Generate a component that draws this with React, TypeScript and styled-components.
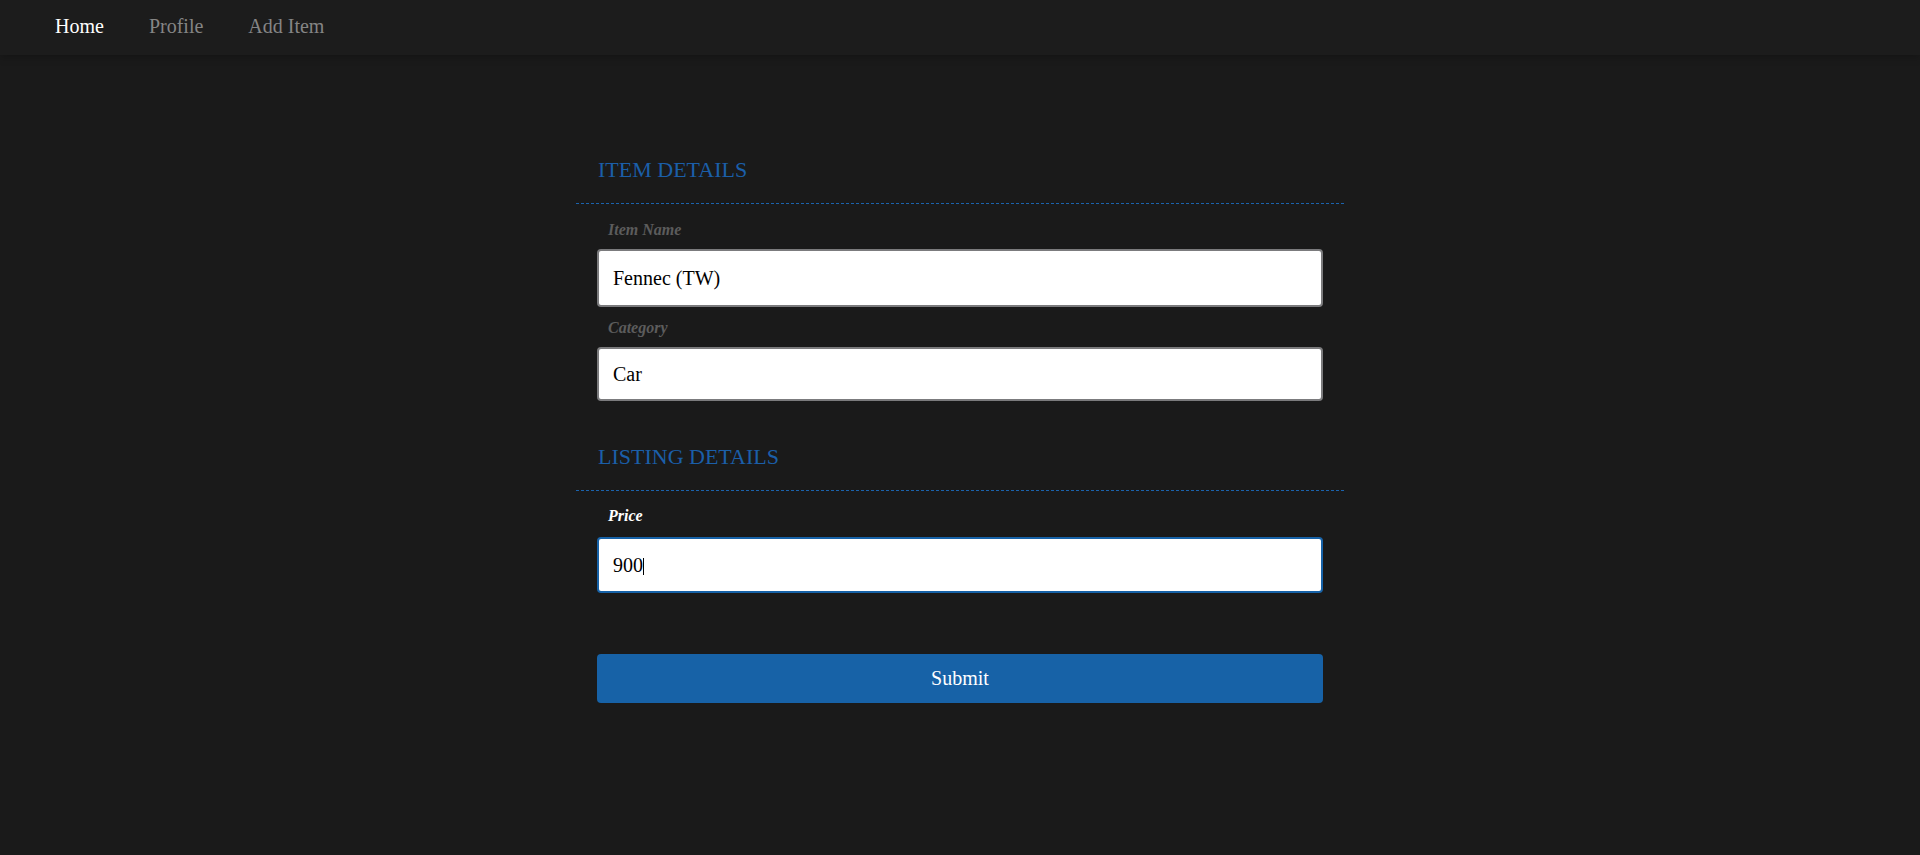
import React from "react";
import styled, { createGlobalStyle } from "styled-components";

const Global = createGlobalStyle`
  html, body {
    margin: 0;
    padding: 0;
    background: #1a1a1a;
    font-family: "Liberation Serif", "Times New Roman", serif;
  }
  * { box-sizing: border-box; }
`;

const Page = styled.div`
  min-height: 855px;
  background: #1a1a1a;
`;

const Header = styled.header`
  height: 55px;
  background: #1c1c1c;
  box-shadow: 0 2px 8px rgba(0, 0, 0, 0.25);
  display: flex;
  align-items: flex-start;
  padding: 14px 0 0 55px;
  gap: 45px;
`;

const NavLink = styled.a<{ $active?: boolean }>`
  font-size: 20px;
  line-height: 24px;
  color: ${(p) => (p.$active ? "#ffffff" : "#858585")};
  text-decoration: none;
  cursor: pointer;
`;

const Main = styled.main`
  width: 768px;
  margin: 0 auto;
  padding-top: 102px;
  display: flex;
  flex-direction: column;
`;

const Section = styled.section<{ $top?: number }>`
  margin-top: ${(p) => p.$top ?? 0}px;
  display: flex;
  flex-direction: column;
`;

const SectionTitle = styled.h2`
  margin: 0;
  padding: 0 22px 20px;
  font-size: 22px;
  line-height: 26px;
  font-weight: normal;
  color: #1b5fa9;
  border-bottom: 1px dashed #1b63ad;
`;

const Fields = styled.div<{ $top?: number }>`
  display: flex;
  flex-direction: column;
  gap: 12px;
  padding: ${(p) => p.$top ?? 17}px 21px 0;
`;

const Field = styled.div<{ $gap?: number }>`
  display: flex;
  flex-direction: column;
  gap: ${(p) => p.$gap ?? 10}px;
`;

const Label = styled.label<{ $active?: boolean }>`
  margin-left: 11px;
  font-size: 16px;
  line-height: 18px;
  font-style: italic;
  font-weight: bold;
  color: ${(p) => (p.$active ? "#ffffff" : "#5c5c5c")};
`;

const InputWrap = styled.div`
  position: relative;
  display: flex;
`;

const Input = styled.input<{ $height: number; $active?: boolean }>`
  width: 100%;
  height: ${(p) => p.$height}px;
  padding: 0 14px;
  font-family: "Liberation Serif", "Times New Roman", serif;
  font-size: 20px;
  color: #000;
  background: #fff;
  border: 2px solid ${(p) => (p.$active ? "#1762a7" : "#7b7b7d")};
  border-radius: 4px;
  outline: none;
  caret-color: transparent;
  &:focus {
    border-color: #1762a7;
    outline: none;
  }
`;

const Caret = styled.span`
  position: absolute;
  left: 46px;
  top: 21px;
  width: 1px;
  height: 17px;
  background: #000;
  pointer-events: none;
`;

const SubmitButton = styled.button`
  margin: 61px 21px 0;
  height: 49px;
  background: #1762a7;
  color: #ffffff;
  border: none;
  border-radius: 4px;
  font-family: "Liberation Serif", "Times New Roman", serif;
  font-size: 20px;
  cursor: pointer;
`;

export default function App() {
  return (
    <Page>
      <Global />
      <Header>
        <NavLink $active>Home</NavLink>
        <NavLink>Profile</NavLink>
        <NavLink>Add Item</NavLink>
      </Header>
      <Main>
        <Section>
          <SectionTitle>ITEM DETAILS</SectionTitle>
          <Fields>
            <Field>
              <Label>Item Name</Label>
              <InputWrap>
                <Input $height={58} defaultValue="Fennec (TW)" />
              </InputWrap>
            </Field>
            <Field>
              <Label>Category</Label>
              <InputWrap>
                <Input $height={54} defaultValue="Car" />
              </InputWrap>
            </Field>
          </Fields>
        </Section>
        <Section $top={43}>
          <SectionTitle>LISTING DETAILS</SectionTitle>
          <Fields $top={16}>
            <Field $gap={12}>
              <Label $active>Price</Label>
              <InputWrap>
                <Input $height={56} $active defaultValue="900" autoFocus />
                <Caret />
              </InputWrap>
            </Field>
          </Fields>
        </Section>
        <SubmitButton>Submit</SubmitButton>
      </Main>
    </Page>
  );
}
